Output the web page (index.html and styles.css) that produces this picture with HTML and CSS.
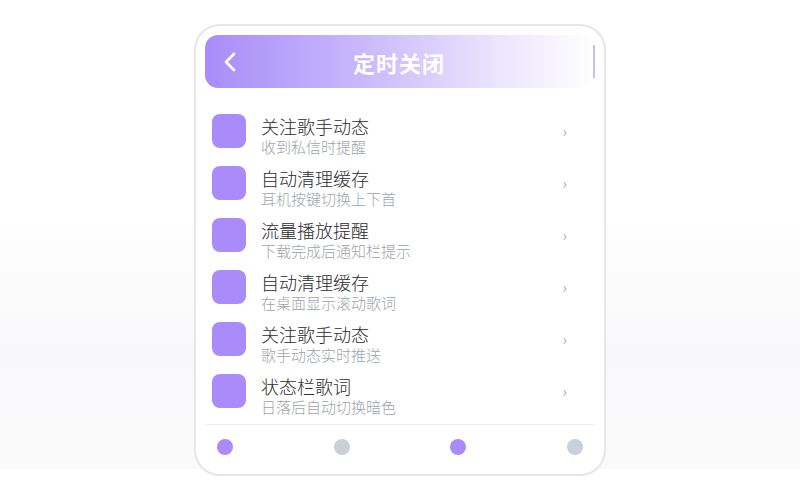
FILE: index.html
```html
<!DOCTYPE html>
<html lang="zh-CN">
<head>
    <meta charset="UTF-8">
    <meta name="viewport" content="width=device-width, initial-scale=1.0">
    <title>定时关闭</title>
    <link rel="stylesheet" href="styles.css">
</head>
<body>
    <div class="phone">
        <header class="top-bar">
            <svg class="back" width="14" height="20" viewBox="0 0 14 20">
                <polyline points="11,2 3,10 11,18" fill="none" stroke="#fff" stroke-width="2.6" stroke-linecap="round" stroke-linejoin="round"/>
            </svg>
            <h1>定时关闭</h1>
            <span class="bar-edge"></span>
        </header>

        <ul class="settings">
            <li class="row">
                <div class="icon"></div>
                <div class="text">
                    <div class="title">关注歌手动态</div>
                    <div class="sub">收到私信时提醒</div>
                </div>
                <span class="arrow">›</span>
            </li>
            <li class="row">
                <div class="icon"></div>
                <div class="text">
                    <div class="title">自动清理缓存</div>
                    <div class="sub">耳机按键切换上下首</div>
                </div>
                <span class="arrow">›</span>
            </li>
            <li class="row">
                <div class="icon"></div>
                <div class="text">
                    <div class="title">流量播放提醒</div>
                    <div class="sub">下载完成后通知栏提示</div>
                </div>
                <span class="arrow">›</span>
            </li>
            <li class="row">
                <div class="icon"></div>
                <div class="text">
                    <div class="title">自动清理缓存</div>
                    <div class="sub">在桌面显示滚动歌词</div>
                </div>
                <span class="arrow">›</span>
            </li>
            <li class="row">
                <div class="icon"></div>
                <div class="text">
                    <div class="title">关注歌手动态</div>
                    <div class="sub">歌手动态实时推送</div>
                </div>
                <span class="arrow">›</span>
            </li>
            <li class="row">
                <div class="icon"></div>
                <div class="text">
                    <div class="title">状态栏歌词</div>
                    <div class="sub">日落后自动切换暗色</div>
                </div>
                <span class="arrow">›</span>
            </li>
        </ul>

        <footer class="dots">
            <span class="dot on"></span>
            <span class="dot"></span>
            <span class="dot on"></span>
            <span class="dot"></span>
        </footer>
    </div>
</body>
</html>
```

FILE: styles.css
```css
html {
    background: #fff;
}

body {
    margin: 0;
    padding: 24px 0;
    background: #fff linear-gradient(to bottom, #fff 0%, #fff 45%, #f8f8fa 75%, #fafafb 100%) no-repeat;
    background-size: 100% 469px;
    font-family: "Noto Sans CJK SC", "Noto Sans", sans-serif;
}

.phone {
    box-sizing: border-box;
    width: 412px;
    height: 452px;
    margin: 0 auto;
    padding: 9px 9px 0;
    background: #fff;
    border: 2px solid #e6e6eb;
    border-radius: 26px;
}

.top-bar {
    position: relative;
    display: flex;
    align-items: center;
    justify-content: center;
    height: 53px;
    border-radius: 13px;
    background: linear-gradient(to right, #a98cf9 0%, #c8b8fb 40%, #ebe5fd 75%, #fff 100%);
}

.top-bar .back {
    position: absolute;
    left: 18px;
    top: 17px;
}

.top-bar h1 {
    margin: 0 0 0 -2px;
    color: #fff;
    font-size: 22px;
    font-weight: 700;
    letter-spacing: 1px;
}

.bar-edge {
    position: absolute;
    right: 0;
    top: 10px;
    width: 2px;
    height: 33px;
    background: #c9bdf7;
}

.settings {
    list-style: none;
    margin: 0;
    padding: 17px 0 7px;
}

.row {
    display: flex;
    align-items: center;
    height: 52px;
    padding: 0 28px 0 7px;
}

.icon {
    width: 34px;
    height: 34px;
    border-radius: 8px;
    background: #a98cf9;
    flex-shrink: 0;
}

.text {
    flex: 1;
    margin-left: 15px;
    padding-top: 9px;
}

.title {
    font-size: 18px;
    font-weight: 300;
    line-height: 22px;
    color: #2c2c30;
}

.sub {
    font-size: 15px;
    font-weight: 300;
    line-height: 20px;
    color: #9ea3ab;
}

.arrow {
    color: #a4a8af;
    font-size: 15px;
    margin-top: -2px;
}

.dots {
    display: flex;
    justify-content: space-between;
    align-items: center;
    height: 44px;
    padding: 0 12px;
    border-top: 1px solid #ececf0;
}

.dot {
    width: 16px;
    height: 16px;
    border-radius: 50%;
    background: #cbd0d6;
}

.dot.on {
    background: #a98cf9;
}
```
